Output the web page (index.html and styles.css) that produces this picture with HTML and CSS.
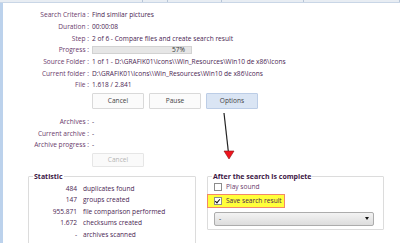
FILE: index.html
```html
<!DOCTYPE html>
<html lang="en">
<head>
    <meta charset="UTF-8" />
    <title>Find similar pictures</title>
    <link rel="stylesheet" href="styles.css">
</head>
<body>
    <div class="toolbar">
        <span class="seg" style="width:143px"></span>
        <span class="seg" style="width:24px"></span>
        <span class="seg" style="width:53px"></span>
        <span class="seg" style="width:82px"></span>
        <span class="seg" style="width:95px"></span>
    </div>

    <div class="window">
        <div class="info">
            <span class="lbl">Search Criteria :</span><span class="val">Find similar pictures</span>
            <span class="lbl">Duration :</span><span class="val">00:00:08</span>
            <span class="lbl">Step :</span><span class="val">2 of 6 - Compare files and create search result</span>
            <span class="lbl">Progress :</span>
            <div class="progress"><span>57%</span></div>
            <span class="lbl">Source Folder :</span><span class="val">1 of 1 - D:\GRAFIK01\Icons\\Win_Resources\Win10 de x86\Icons</span>
            <span class="lbl">Current folder :</span><span class="val">D:\GRAFIK01\Icons\\Win_Resources\Win10 de x86\Icons</span>
            <span class="lbl">File :</span><span class="val">1.618 / 2.841</span>
        </div>

        <div class="buttons">
            <button>Cancel</button>
            <button>Pause</button>
            <button class="active">Options</button>
        </div>

        <div class="info archive">
            <span class="lbl">Archives :</span><span class="val">-</span>
            <span class="lbl">Current archive :</span><span class="val">-</span>
            <span class="lbl">Archive progress :</span><span class="val">-</span>
        </div>

        <div class="buttons">
            <button class="disabled">Cancel</button>
        </div>

        <div class="groups">
            <fieldset class="stats">
                <legend>Statistic</legend>
                <div class="stat-list">
                    <span class="num">484</span><span>duplicates found</span>
                    <span class="num">147</span><span>groups created</span>
                    <span class="num">955.871</span><span>file comparison performed</span>
                    <span class="num">1.672</span><span>checksums created</span>
                    <span class="num">-</span><span>archives scanned</span>
                    <span class="num">-</span><span>files scanned</span>
                </div>
            </fieldset>

            <fieldset class="after">
                <legend>After the search is complete</legend>
                <label class="check"><span class="box"></span>Play sound</label>
                <label class="check marked"><span class="box checked"></span>Save search result</label>
                <div class="select"><span>-</span><span class="caret"></span></div>
            </fieldset>
        </div>

        <!-- annotation arrow -->
        <svg class="arrow" width="20" height="50" viewBox="0 0 20 50">
            <line x1="4" y1="1" x2="8.5" y2="41" stroke="#222" stroke-width="1.2" />
            <polygon points="4,39 14,39 9,47" fill="#f0141e" stroke="#8a1010" stroke-width="0.6" />
        </svg>
    </div>
</body>
</html>
```

FILE: styles.css
```css
body {
    margin: 0;
    width: 400px;
    height: 243px;
    overflow: hidden;
    background: #ffffff;
    font-family: 'Open Sans', 'Noto Sans', sans-serif;
    font-size: 6.6px;
    color: #4a2552;
}

.toolbar {
    display: flex;
    height: 2px;
    background: #e8edf3;
    border-bottom: 1px solid #c9d6e6;
}

.toolbar .seg {
    border-right: 1px solid #b8c6d8;
}

.window {
    position: relative;
    height: 240px;
    border-left: 3px solid #bcd2ec;
    box-sizing: border-box;
}

.info {
    display: grid;
    grid-template-columns: 86px 1fr;
    grid-auto-rows: 11.67px;
    column-gap: 3px;
    align-items: center;
    padding-top: 6px;
}

.info.archive {
    padding-top: 7px;
}

.lbl {
    text-align: right;
    color: #6a3a6c;
    white-space: nowrap;
}

.val {
    white-space: nowrap;
}

.progress {
    height: 8px;
    width: 100px;
    background: #e6e6e6;
    border: 1px solid #d2d2d2;
    display: flex;
    align-items: center;
    justify-content: flex-end;
    padding-right: 6px;
    box-sizing: border-box;
    color: #333;
}

.buttons {
    display: flex;
    gap: 5px;
    padding-left: 89px;
    margin-top: 2px;
}

button {
    width: 52px;
    height: 16px;
    padding: 0;
    font-family: inherit;
    font-size: 6.6px;
    color: #444;
    background: #fbfbfb;
    border: 1px solid #d9d9d9;
    border-radius: 1px;
}

button.active {
    background: #dae5f4;
    border-color: #bccde6;
}

button.disabled {
    color: #b5b5b5;
    background: #fafafa;
    border-color: #e6e6e6;
    height: 14px;
}

.groups {
    display: flex;
    gap: 11px;
    margin-top: 5px;
    padding-left: 25px;
}

fieldset {
    margin: 0;
    border: 1px solid #dcdcdc;
    border-radius: 1px;
    padding: 0 6px;
    box-sizing: border-box;
}

legend {
    padding: 0 1px;
    margin-left: -2px;
    font-weight: bold;
    font-size: 7px;
    color: #3d1745;
}

.stats {
    width: 168px;
    height: 80px;
}

.stat-list {
    display: grid;
    grid-template-columns: 42px 1fr;
    column-gap: 6px;
    grid-auto-rows: 11.5px;
    align-items: center;
    padding-top: 2px;
    white-space: nowrap;
}

.num {
    text-align: right;
}

.after {
    width: 177px;
    height: 58px;
}

.check {
    display: flex;
    align-items: center;
    gap: 4px;
    height: 12px;
    color: #6a3a6c;
}

.check.marked {
    width: 70px;
    margin-left: -7px;
    padding-left: 6px;
    margin-top: 1px;
    background: #ffff3a;
    border: 1px solid #f2876a;
    color: #4a2552;
}

.box {
    width: 6px;
    height: 6px;
    border: 1px solid #8c8c8c;
    background: #fff;
    position: relative;
}

.box.checked::after {
    content: "";
    position: absolute;
    left: 1px;
    top: 0;
    width: 2px;
    height: 4px;
    border: solid #111;
    border-width: 0 1px 1px 0;
    transform: rotate(40deg);
}

.select {
    display: flex;
    justify-content: space-between;
    align-items: center;
    margin-top: 4px;
    width: 160px;
    height: 14px;
    box-sizing: border-box;
    padding: 0 4px;
    border: 1px solid #acacac;
    border-radius: 2px;
    background: linear-gradient(#f3f3f3, #dddddd);
    color: #222;
}

.caret {
    width: 0;
    height: 0;
    border-left: 2.5px solid transparent;
    border-right: 2.5px solid transparent;
    border-top: 3px solid #111;
}

.arrow {
    position: absolute;
    left: 217px;
    top: 109px;
}
```
